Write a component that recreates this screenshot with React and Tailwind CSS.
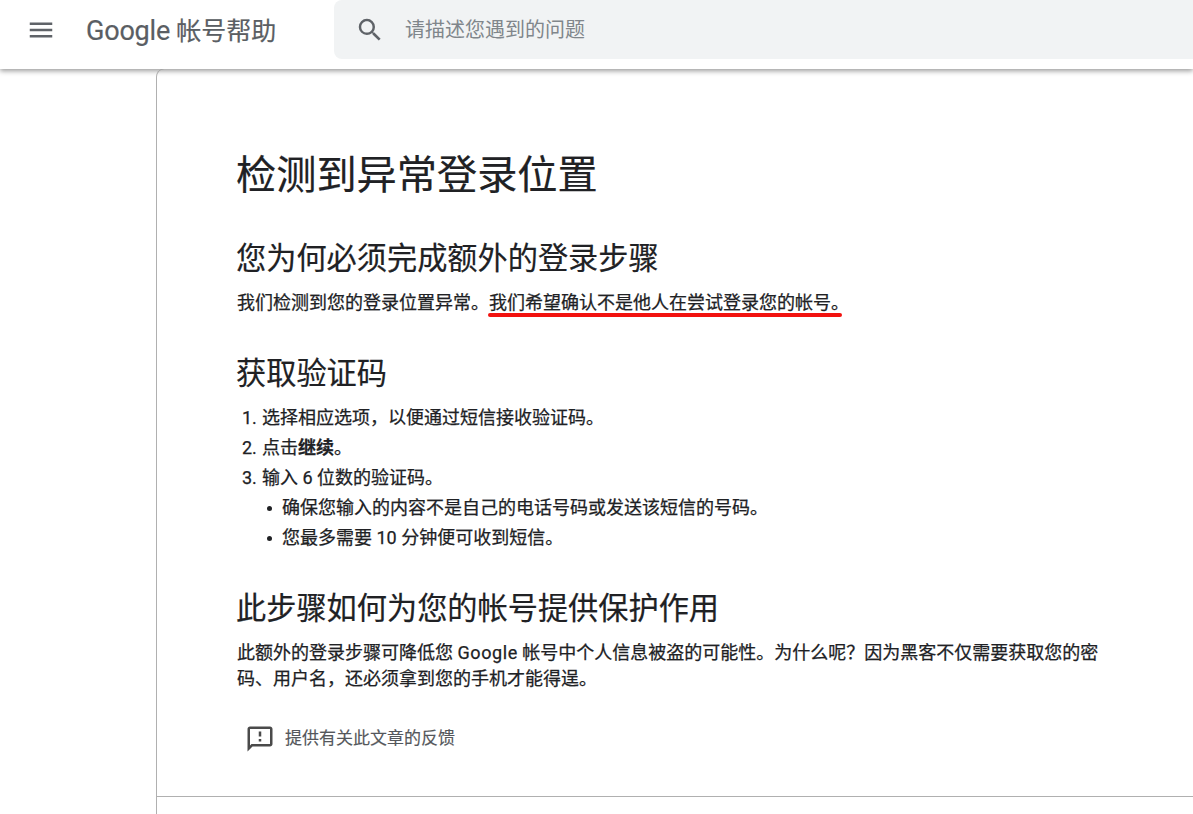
import React from "react";

const fontStack = { fontFamily: "Roboto, 'Noto Sans CJK SC', sans-serif" };

function Header() {
  return (
    <header className="relative z-10 flex h-[69px] bg-white shadow-[0_2px_5px_rgba(0,0,0,0.4)]">
      <div className="flex h-[59px] w-[334px] items-center">
        <svg className="ml-[26px] h-[30px] w-[30px] fill-[#5f6368]" viewBox="0 0 24 24">
          <path d="M3 18h18v-2H3v2zm0-5h18v-2H3v2zm0-7v2h18V6H3z" />
        </svg>
        <div className="mt-[3px] ml-[30px] text-[25px] leading-[32px] text-[#5a5e63] [-webkit-text-stroke:0.2px]">
          <span className="text-[27px] tracking-[-0.2px]">Google</span> 帐号帮助
        </div>
      </div>
      <div className="flex h-[59px] flex-1 items-center rounded-l-lg bg-[#f1f3f4]">
        <svg className="ml-[21px] h-[30px] w-[30px] fill-[#5f6368]" viewBox="0 0 24 24">
          <path d="M15.5 14h-.79l-.28-.27A6.47 6.47 0 0 0 16 9.5 6.5 6.5 0 1 0 9.5 16c1.61 0 3.09-.59 4.23-1.57l.27.28v.79l5 4.99L20.49 19l-4.99-5zm-6 0C7.01 14 5 11.99 5 9.5S7.01 5 9.5 5 14 7.01 14 9.5 11.99 14 9.5 14z" />
        </svg>
        <span className="ml-[20px] text-[20px] text-[#80868b]">请描述您遇到的问题</span>
      </div>
    </header>
  );
}

function Bullet() {
  return <span className="mt-[13px] mr-[10px] h-[5px] w-[5px] rounded-full bg-[#202124]"></span>;
}

export default function App() {
  return (
    <div className="h-[814px] w-[1193px] overflow-hidden bg-white" style={fontStack}>
      <Header />
      <main className="ml-[156px] h-[745px] rounded-tl-lg border-l border-[#b0b0b0] pl-[80px] text-[#202124]">
        <div className="w-[870px]">
          <h1 className="-ml-px pt-[79px] text-[40.2px] leading-[56px] font-normal [-webkit-text-stroke:0.2px]">检测到异常登录位置</h1>
          <h2 className="-ml-px mt-[35px] text-[30.2px] leading-[40px] font-normal [-webkit-text-stroke:0.2px]">您为何必须完成额外的登录步骤</h2>
          <p className="mt-[9px] text-[18px] leading-[30px] [-webkit-text-stroke:0.25px]">
            我们检测到您的登录位置异常。
            <span className="relative">
              我们希望确认不是他人在尝试登录您的帐号。
              <span className="absolute -bottom-[4px] -left-px h-[4px] w-[354px] rounded-full bg-[#f2120f]"></span>
            </span>
          </p>
          <h2 className="-ml-px mt-[36px] text-[30.2px] leading-[40px] font-normal [-webkit-text-stroke:0.2px]">获取验证码</h2>
          <ol className="mt-[9px] text-[18px] leading-[30px] [-webkit-text-stroke:0.25px]">
            <li className="flex pl-[5px]"><span className="w-[20px]">1.</span>选择相应选项，以便通过短信接收验证码。</li>
            <li className="flex pl-[5px]"><span className="w-[20px]">2.</span>点击<b className="font-bold">继续</b>。</li>
            <li className="flex pl-[5px]"><span className="w-[20px]">3.</span>输入 6 位数的验证码。</li>
            <li className="flex pl-[30px]"><Bullet />确保您输入的内容不是自己的电话号码或发送该短信的号码。</li>
            <li className="flex pl-[30px]"><Bullet />您最多需要 10 分钟便可收到短信。</li>
          </ol>
          <h2 className="-ml-px mt-[36px] text-[30.2px] leading-[40px] font-normal [-webkit-text-stroke:0.2px]">此步骤如何为您的帐号提供保护作用</h2>
          <p className="mt-[11px] text-[18px] leading-[26px] [-webkit-text-stroke:0.25px]">
            此额外的登录步骤可降低您 <span className="tracking-[0.6px]">Google</span> 帐号中个人信息被盗的可能性。为什么呢？因为黑客不仅需要获取您的密
            <br />
            码、用户名，还必须拿到您的手机才能得逞。
          </p>
          <div className="mt-[32px] flex items-center pl-[8px] text-[17px] text-[#54575b]">
            <svg className="h-[30px] w-[30px] fill-[#4a4a4a]" viewBox="0 0 24 24">
              <path d="M20 2H4c-1.1 0-1.99.9-1.99 2L2 22l4-4h14c1.1 0 2-.9 2-2V4c0-1.1-.9-2-2-2zm0 14H5.17L4 17.17V4h16v12zM11 12h2v2h-2zm0-6h2v4h-2z" />
            </svg>
            <span className="ml-[10px] [-webkit-text-stroke:0.15px]">提供有关此文章的反馈</span>
          </div>
        </div>
        <div className="-ml-[80px] mt-[42px] border-t border-[#b0b0b0]"></div>
      </main>
    </div>
  );
}
